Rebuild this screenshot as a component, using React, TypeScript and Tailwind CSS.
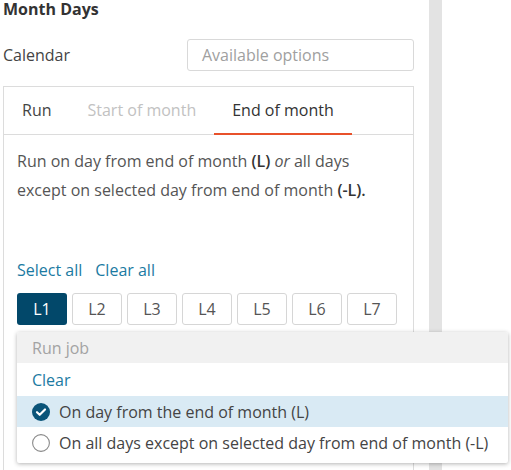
import { useState } from 'react';

const days = ['L1', 'L2', 'L3', 'L4', 'L5', 'L6', 'L7'];

export default function App() {
  const [selected, setSelected] = useState<string[]>(['L1']);
  const [mode, setMode] = useState<'L' | '-L'>('L');

  const toggleDay = (d: string) => {
    setSelected(cur => (cur.includes(d) ? cur.filter(x => x !== d) : [...cur, d]));
  };

  return (
    <div className="relative flex h-[470px] w-[511px] overflow-hidden bg-white font-['Open_Sans',sans-serif] text-[16px]">
      <div className="w-[429px] shrink-0 pl-[3px] pr-[15px]">
        <h2 className="text-[16px] font-bold leading-[18px] text-[#333]">Month Days</h2>

        <div className="mt-[21px] flex items-center justify-between">
          <span className="text-[#444]">Calendar</span>
          <div className="flex h-[32px] w-[227px] items-center rounded-[3px] border border-[#d9d9d9] px-[14px] text-[#a0a0a0]">
            Available options
          </div>
        </div>

        <div className="mt-[15px] h-[400px] border border-[#dcdcdc]">
          <div className="flex h-[48px] border-b border-[#dcdcdc]">
            <button className="-mb-px border-b-2 border-transparent px-[18px] text-[#444]">Run</button>
            <button className="-mb-px border-b-2 border-transparent px-[18px] text-[#c2c2c2]">Start of month</button>
            <button className="-mb-px border-b-2 border-[#e8512b] px-[18px] text-[#333]">End of month</button>
          </div>

          <div className="px-[13px] pt-[12px]">
            <p className="leading-[29px] text-[#555]">
              Run on day from end of month <b className="font-semibold text-[#333]">(L)</b> <i>or</i> all days except on selected day from end of month <b className="font-semibold text-[#333]">(-L).</b>
            </p>

            <div className="mt-[54px] flex gap-[13px] leading-[22px] text-[#1b7aa2]">
              <span>Select all</span>
              <span>Clear all</span>
            </div>

            <div className="mt-[12px] flex gap-[5px]">
              {days.map(d => (
                <button
                  key={d}
                  onClick={() => toggleDay(d)}
                  className={
                    selected.includes(d)
                      ? 'h-[32px] w-[50px] rounded-[3px] bg-[#02486a] text-white'
                      : 'h-[32px] w-[50px] rounded-[3px] border border-[#d6d6d6] bg-white text-[#555]'
                  }
                >
                  {d}
                </button>
              ))}
            </div>
          </div>
        </div>
      </div>

      <div className="w-[13px] shrink-0 bg-[#e3e3e3]" />

      <div className="absolute left-[17px] top-[332px] w-[491px] overflow-hidden rounded-[2px] bg-white shadow-[0_1px_4px_rgba(0,0,0,0.3)]">
        <div className="flex h-[31px] items-center bg-[#f1f1f1] px-[15px] text-[#a3a3a3]">Run job</div>
        <div className="flex h-[33px] items-center px-[15px] text-[#1b7aa2]">Clear</div>
        <button
          onClick={() => setMode('L')}
          className={`flex h-[31px] w-full items-center gap-[9px] px-[15px] text-left text-[#444] ${mode === 'L' ? 'bg-[#d9eaf4]' : ''}`}
        >
          <Radio on={mode === 'L'} />
          On day from the end of month (L)
        </button>
        <button
          onClick={() => setMode('-L')}
          className={`flex h-[36px] w-full items-center gap-[9px] px-[15px] pb-[4px] text-left text-[#444] ${mode === '-L' ? 'bg-[#d9eaf4]' : ''}`}
        >
          <Radio on={mode === '-L'} />
          On all days except on selected day from end of month (-L)
        </button>
      </div>
    </div>
  );
}

function Radio({ on }: { on: boolean }) {
  if (on) {
    return (
      <svg width="18" height="18" viewBox="0 0 18 18" className="shrink-0">
        <circle cx="9" cy="9" r="9" fill="#0a5479" />
        <path d="M5 9.2l2.7 2.6L13 6.5" fill="none" stroke="#fff" strokeWidth="2.2" strokeLinecap="round" strokeLinejoin="round" />
      </svg>
    );
  }
  return (
    <svg width="18" height="18" viewBox="0 0 18 18" className="shrink-0">
      <circle cx="9" cy="9" r="8.4" fill="#fff" stroke="#8a8a8a" strokeWidth="1.1" />
    </svg>
  );
}
